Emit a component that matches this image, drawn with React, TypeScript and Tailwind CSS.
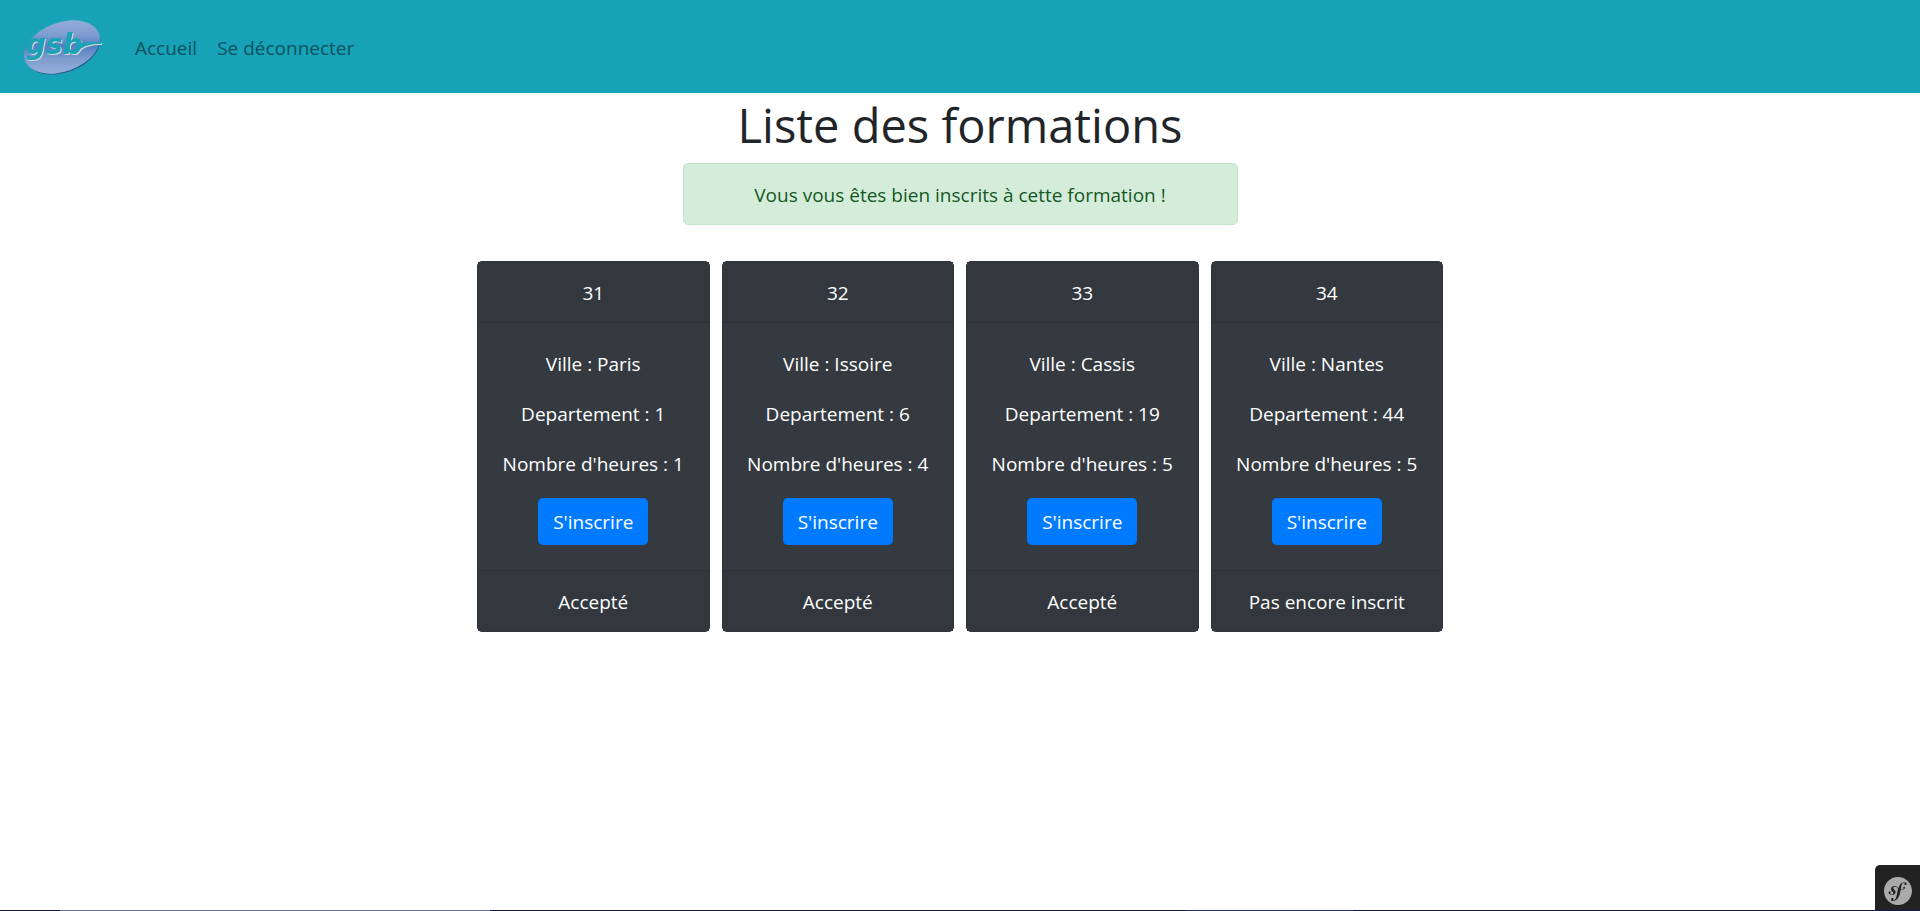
import { SiSymfony } from "react-icons/si";

type Formation = {
  id: number;
  ville: string;
  departement: number;
  heures: number;
  statut: string;
};

const formations: Formation[] = [
  { id: 31, ville: "Paris", departement: 1, heures: 1, statut: "Accepté" },
  { id: 32, ville: "Issoire", departement: 6, heures: 4, statut: "Accepté" },
  { id: 33, ville: "Cassis", departement: 19, heures: 5, statut: "Accepté" },
  { id: 34, ville: "Nantes", departement: 44, heures: 5, statut: "Pas encore inscrit" },
];

function Logo() {
  return (
    <svg viewBox="0 0 80 58" className="h-[58px] w-20" role="img" aria-label="gsb">
      <defs>
        <linearGradient id="oval" x1="0" y1="0" x2="0" y2="1">
          <stop offset="0" stopColor="#93acd8" />
          <stop offset="0.28" stopColor="#7f9dd0" />
          <stop offset="0.48" stopColor="#4f7fc0" />
          <stop offset="0.72" stopColor="#7d9ccf" />
          <stop offset="1" stopColor="#97b0da" />
        </linearGradient>
        <clipPath id="ovalClip">
          <ellipse cx="40" cy="28" rx="39.5" ry="24.5" transform="rotate(-20 40 28)" />
        </clipPath>
      </defs>
      <ellipse cx="40.8" cy="29" rx="39" ry="24.5" transform="rotate(-20 40.8 29)" fill="#2a5d8c" />
      <g clipPath="url(#ovalClip)">
        <rect x="0" y="1" width="80" height="54" fill="url(#oval)" />
      </g>
      <g className="drop-shadow-[1px_1px_0_#dcd8d0]" fill="#19a2b8">
        <text x="4" y="35" className="font-['DejaVu_Sans'] text-[28px] font-bold italic">gsb</text>
        <path d="M56 26 C60 23 65 23 80 23 L79 25 C68 25 63 27 58 30 Z" />
      </g>
    </svg>
  );
}

function FormationCard({ formation }: { formation: Formation }) {
  return (
    <article className="rounded-[5px] border border-[#2f353a] bg-[#343a40] text-center leading-[32px] text-white">
      <header className="border-b border-[#2c3136] bg-[#32383e] pt-[15px] pb-[13px]">{formation.id}</header>
      <div className="flex flex-col items-center gap-[18px] px-4 py-[25px] whitespace-nowrap">
        <p>Ville : {formation.ville}</p>
        <p>Departement : {formation.departement}</p>
        <p>Nombre d'heures : {formation.heures}</p>
        <button type="button" className="rounded-[5px] bg-[#007bff] px-[15px] pt-2 pb-[7px]">
          S'inscrire
        </button>
      </div>
      <footer className="border-t border-[#2c3136] bg-[#32383e] pt-[15px] pb-[13px]">{formation.statut}</footer>
    </article>
  );
}

export default function App() {
  return (
    <div className="flex min-h-screen flex-col bg-white font-['Open_Sans',sans-serif] text-[19px] leading-[32px] text-[#212529]">
      <nav className="flex h-[93px] items-center bg-[#17a2b8] px-[22px] pt-[2px] text-[#0c515c]">
        <a href="#" className="mr-[23px]">
          <Logo />
        </a>
        <a href="#" className="px-[10px]">Accueil</a>
        <a href="#" className="px-[10px]">Se déconnecter</a>
      </nav>

      <main className="flex grow flex-col items-center">
        <h1 className="mb-[6px] text-[47px] leading-[64px]">Liste des formations</h1>
        <div
          role="alert"
          className="mb-9 w-full max-w-[555px] rounded-[5px] border border-[#c3e6cb] bg-[#d4edda] pt-[15px] pb-[13px] text-center text-[#155724]"
        >
          Vous vous êtes bien inscrits à cette formation !
        </div>
        <section className="grid w-full max-w-[966px] grid-cols-4 gap-3">
          {formations.map((formation) => (
            <FormationCard key={formation.id} formation={formation} />
          ))}
        </section>
      </main>

      <footer>
        <div className="flex justify-end">
          <button
            type="button"
            aria-label="Symfony"
            className="flex size-[45px] items-center justify-center rounded-tl-[5px] bg-[#222222] pt-[6px] text-[#aaaaaa]"
          >
            <SiSymfony size={28} />
          </button>
        </div>
        <div className="flex h-px bg-[#141947]">
          <div className="ml-[60px] w-[430px] bg-[#6b709b]" />
          <div className="ml-[696px] w-[168px] bg-[#253068]" />
        </div>
      </footer>
    </div>
  );
}
